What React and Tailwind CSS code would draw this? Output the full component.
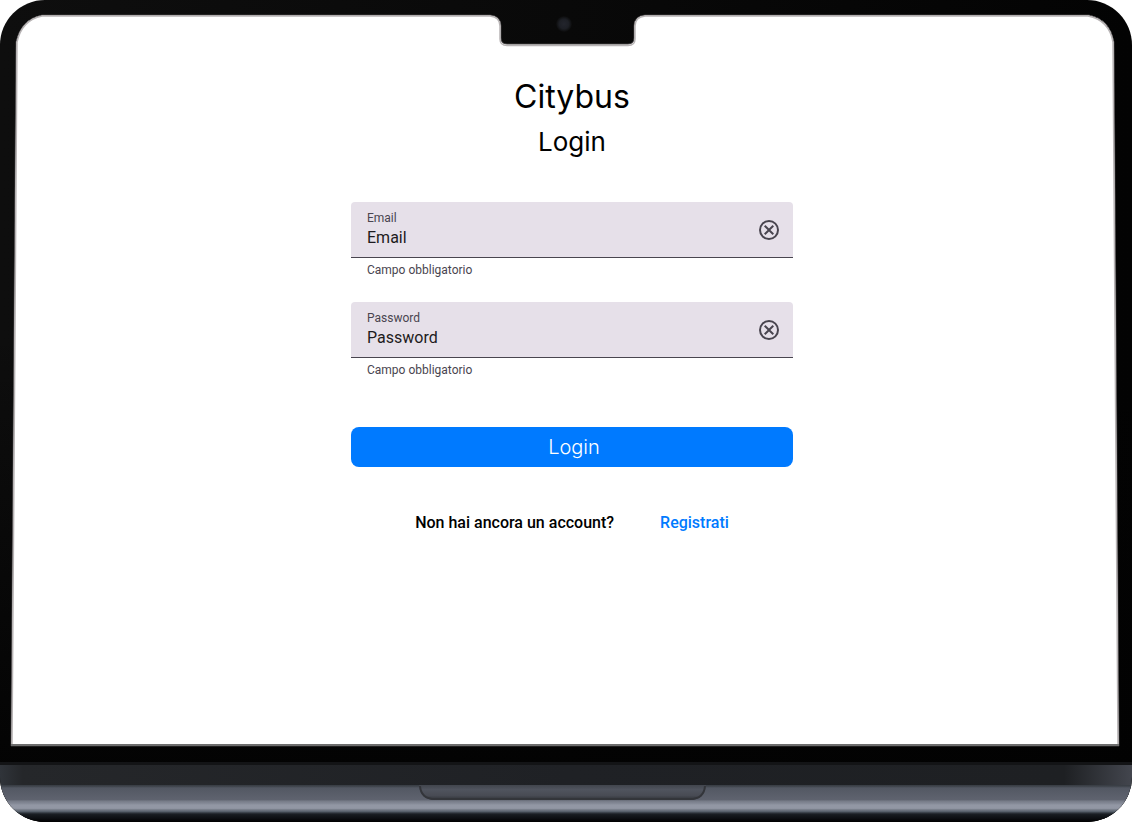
import { useState } from "react";

function LaptopFrame() {
  return (
    <svg
      aria-hidden="true"
      className="absolute inset-0 -z-10 h-full w-full"
      viewBox="0 0 1132 822"
      preserveAspectRatio="none"
    >
      <defs>
        <linearGradient id="bezel" x1="0" x2="1" y1="0" y2="0">
          <stop offset="0" stopColor="#0e0e0e" />
          <stop offset="0.5" stopColor="#090909" />
          <stop offset="1" stopColor="#030303" />
        </linearGradient>
        <linearGradient id="bezelFade" x1="0" x2="0" y1="0" y2="1">
          <stop offset="0.4" stopColor="#020202" stopOpacity="0" />
          <stop offset="1" stopColor="#020202" />
        </linearGradient>
        <linearGradient id="hinge" x1="0" x2="1" y1="0" y2="0">
          <stop offset="0" stopColor="#30343a" />
          <stop offset="0.02" stopColor="#25272a" />
          <stop offset="0.5" stopColor="#1f2125" />
          <stop offset="0.94" stopColor="#1e2023" />
          <stop offset="1" stopColor="#43464e" />
        </linearGradient>
        <linearGradient id="base" x1="0" x2="0" y1="785" y2="822" gradientUnits="userSpaceOnUse">
          <stop offset="0" stopColor="#363b42" />
          <stop offset="0.04" stopColor="#41464e" />
          <stop offset="0.08" stopColor="#535863" />
          <stop offset="0.4" stopColor="#5f636f" />
          <stop offset="0.43" stopColor="#757a86" />
          <stop offset="0.5" stopColor="#858a97" />
          <stop offset="0.54" stopColor="#9297a4" />
          <stop offset="0.63" stopColor="#9297a4" />
          <stop offset="0.67" stopColor="#747a86" />
          <stop offset="0.72" stopColor="#555e69" />
          <stop offset="0.76" stopColor="#2b3138" />
          <stop offset="0.8" stopColor="#171b20" />
          <stop offset="0.9" stopColor="#0c0e12" />
          <stop offset="1" stopColor="#000000" />
        </linearGradient>
        <linearGradient id="lip" x1="0" x2="0" y1="0" y2="1">
          <stop offset="0" stopColor="#41454d" />
          <stop offset="0.3" stopColor="#50545e" />
          <stop offset="0.7" stopColor="#484b54" />
          <stop offset="1" stopColor="#303237" />
        </linearGradient>
        <radialGradient id="camera">
          <stop offset="0" stopColor="#23252d" />
          <stop offset="0.6" stopColor="#1d1f25" />
          <stop offset="1" stopColor="#0b0b0b" />
        </radialGradient>
        <clipPath id="body">
          <rect width="1132" height="822" rx="45" />
        </clipPath>
      </defs>
      <g clipPath="url(#body)">
        <rect width="1132" height="822" fill="url(#bezel)" />
        <rect width="1132" height="822" fill="url(#bezelFade)" />
        <path
          d="M42 15H490Q501 16 501 26V38Q501 44 507 44H628Q634 44 634 38V26Q634 16 645 15H1089Q1110 19 1114 42L1119 746H11L16 42Q21 19 42 15Z"
          fill="#ffffff"
          stroke="#3a3839"
          strokeWidth="1"
        />
        <path
          d="M42 16H490Q500 17 500 26V39Q500 45.500 507 45.500H628Q635 45.500 635 39V26Q635 17 645 16H1088Q1109 20 1113 42L1118 745H12L17 42Q22 20 42 16Z"
          fill="none"
          stroke="#b8b4b5"
          strokeWidth="1.500"
        />
        <path d="M11 745H1119" stroke="#6d6d6d" strokeWidth="2" />
        <circle cx="564" cy="24" r="8" fill="url(#camera)" />
        <rect y="762" width="1132" height="3" fill="#131416" />
        <rect y="765" width="1132" height="20" fill="url(#hinge)" />
        <rect y="785" width="1132" height="37" fill="url(#base)" />
        <path
          d="M419 785H706Q705 800 690 800H435Q420 800 419 785Z"
          fill="url(#lip)"
        />
        <path
          d="M420 786Q421 799 435 799H690Q704 799 705 786"
          fill="none"
          stroke="#33353a"
          strokeWidth="2"
        />
      </g>
    </svg>
  );
}

function TextField({ id, label, type, helper }) {
  const [value, setValue] = useState("");
  return (
    <div className="font-[Roboto,sans-serif]">
      <div className="flex h-14 items-center rounded-t-sm border-b border-[#49454f] bg-[#e6e0e9] pr-3 pl-4">
        <div className="flex min-w-0 flex-1 flex-col">
          <label htmlFor={id} className="text-xs leading-4 text-[#49454f]">
            {label}
          </label>
          <input
            id={id}
            type={type}
            value={value}
            onChange={(e) => setValue(e.target.value)}
            placeholder={label}
            aria-describedby={`${id}-helper`}
            className="h-6 w-full bg-transparent text-base text-[#1d1b20] outline-none placeholder:text-[#1d1b20]"
          />
        </div>
        <button type="button" aria-label={`Cancella ${label}`} onClick={() => setValue("")}>
          <svg viewBox="0 0 24 24" className="size-6 fill-[#49454f]">
            <path d="M8.400 17 12 13.400 15.600 17 17 15.600 13.400 12 17 8.400 15.600 7 12 10.600 8.400 7 7 8.400 10.600 12 7 15.600ZM12 2a10 10 0 1 0 0 20 10 10 0 0 0 0-20Zm0 18a8 8 0 1 1 0-16 8 8 0 0 1 0 16Z" />
          </svg>
        </button>
      </div>
      <p id={`${id}-helper`} className="px-4 pt-1 text-xs leading-4 text-[#49454f]">
        {helper}
      </p>
    </div>
  );
}

export default function App() {
  return (
    <div className="relative isolate flex min-h-screen flex-col items-center bg-white px-6 pt-19 pb-24">
      <LaptopFrame />
      <main className="ml-3 flex w-full max-w-[442px] flex-col font-[Inter,sans-serif] text-black">
        <h1 className="text-center text-[32px] leading-[41px]">Citybus</h1>
        <h2 className="mt-2 text-center text-[26px] leading-[34px]">Login</h2>
        <form className="mt-[43px] flex flex-col" onSubmit={(e) => e.preventDefault()}>
          <div className="flex flex-col gap-6">
            <TextField id="email" label="Email" type="email" helper="Campo obbligatorio" />
            <TextField id="password" label="Password" type="password" helper="Campo obbligatorio" />
          </div>
          <button
            type="submit"
            className="mt-[49px] h-10 rounded-lg bg-[#007aff] pl-1 text-xl font-light text-white"
          >
            Login
          </button>
        </form>
        <div className="mt-11 flex flex-wrap justify-center gap-x-[46px] font-[Roboto,sans-serif] text-base font-medium">
          <p>Non hai ancora un account?</p>
          <a href="#registrati" className="text-[#007aff]">
            Registrati
          </a>
        </div>
      </main>
    </div>
  );
}
